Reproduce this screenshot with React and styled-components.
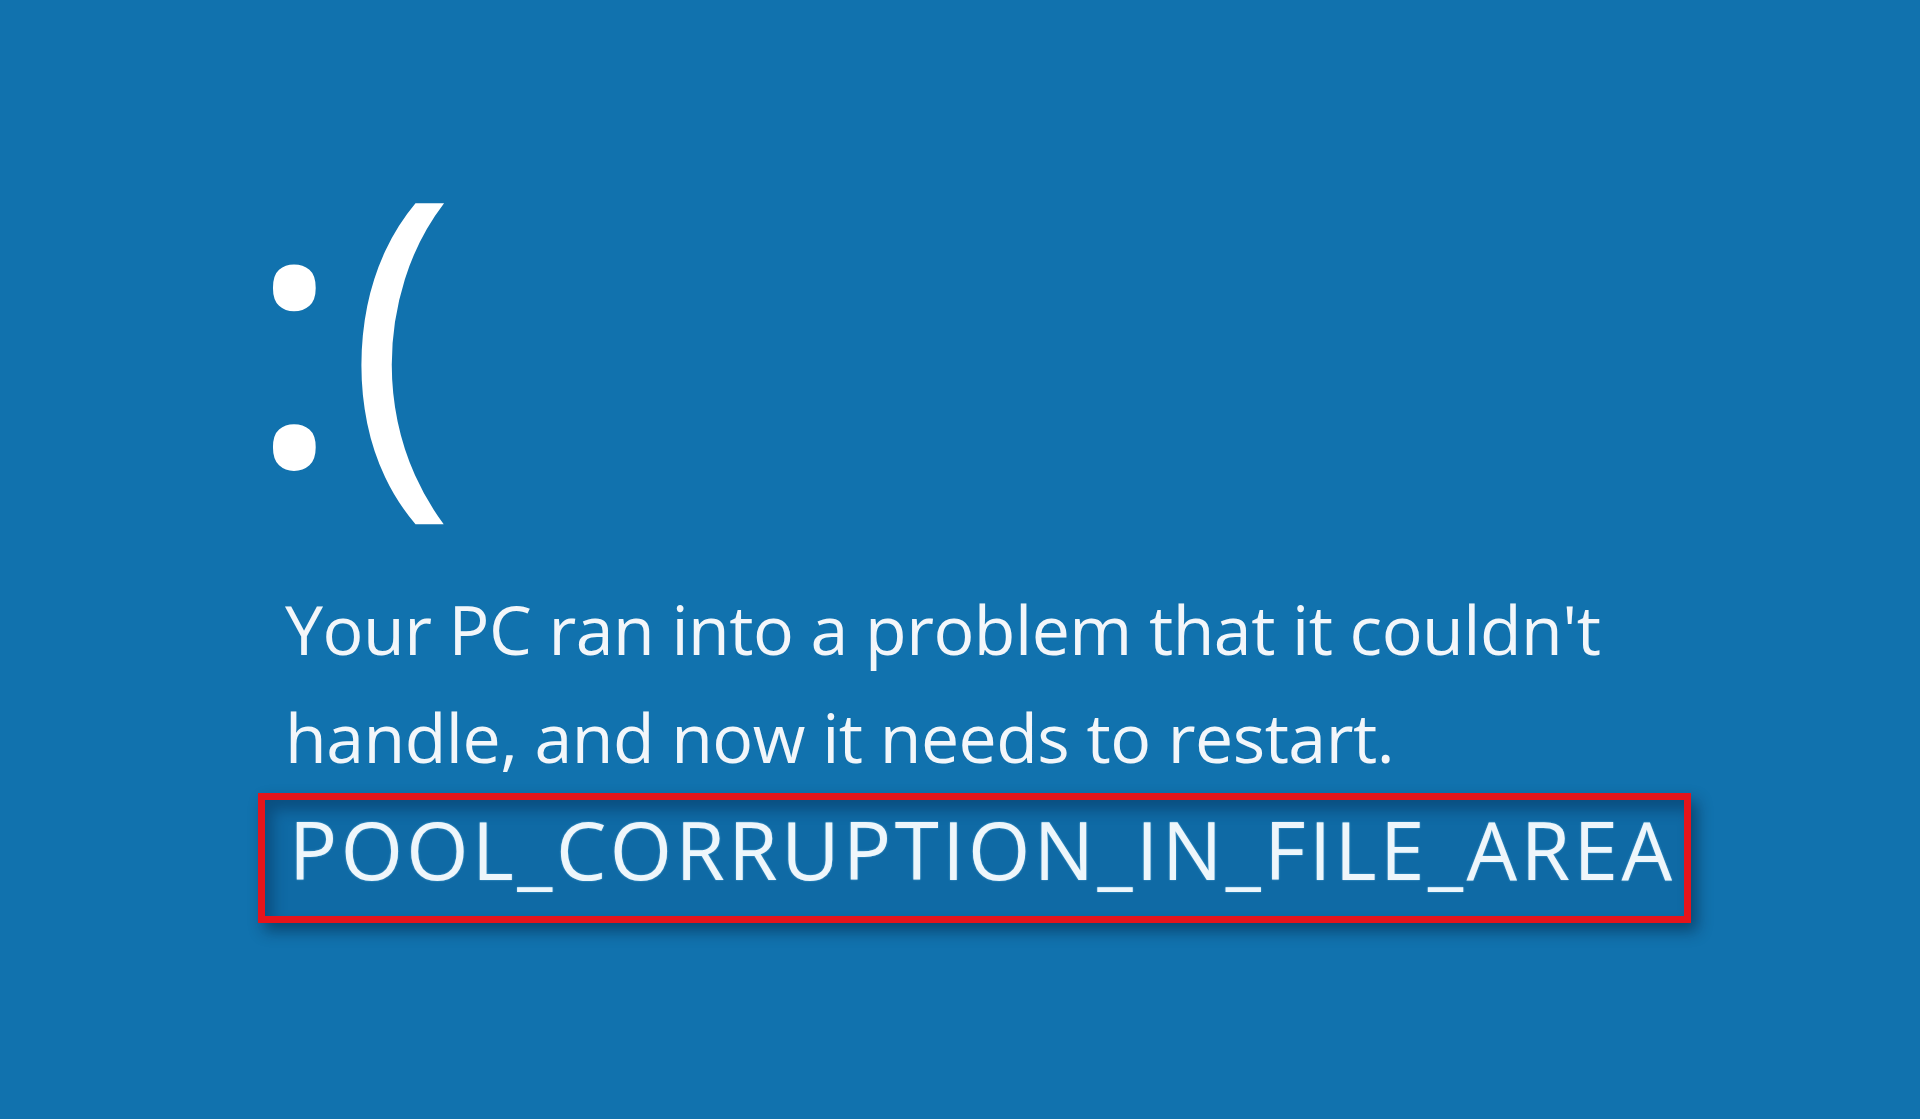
import React from 'react'
import styled, { createGlobalStyle } from 'styled-components'

const GlobalStyle = createGlobalStyle`
  html, body {
    margin: 0;
    padding: 0;
    background: #1172ae;
  }
  body {
    font-family: "Open Sans", "Noto Sans", sans-serif;
    color: #f4f8fb;
  }
`

const Screen = styled.div`
  width: 1920px;
  height: 1119px;
  overflow: hidden;
  background: #1172ae;
  display: flex;
  flex-direction: column;
  padding: 0 0 0 246px;
  box-sizing: border-box;
`

const Face = styled.div`
  margin-top: 140px;
  height: 368px;
  font-size: 368px;
  font-weight: 500;
  line-height: 1;
  color: #ffffff;
  letter-spacing: 4px;
`

const Message = styled.p`
  margin: 67px 0 0 39px;
  font-size: 68px;
  line-height: 108px;
  letter-spacing: -0.5px;
  font-weight: 400;
  color: #f2f6fa;
`

const Code = styled.div`
  align-self: flex-start;
  margin: 2px 0 0 12px;
  padding: 6px 8px 24px 24px;
  border: 7px solid #e6141b;
  background: #0f6aa5;
  box-shadow: inset 8px 10px 14px rgba(0, 30, 60, 0.35),
    6px 8px 14px rgba(0, 20, 40, 0.45);
  font-size: 80px;
  line-height: 86px;
  letter-spacing: 3.5px;
  color: #eef6fb;
  text-shadow: 0 0 2px rgba(150, 220, 255, 0.6);
`

export default function App() {
  return (
    <Screen>
      <GlobalStyle />
      <Face>:(</Face>
      <Message>
        Your PC ran into a problem that it couldn't
        <br />
        handle, and now it needs to restart.
      </Message>
      <Code>POOL_CORRUPTION_IN_FILE_AREA</Code>
    </Screen>
  )
}
